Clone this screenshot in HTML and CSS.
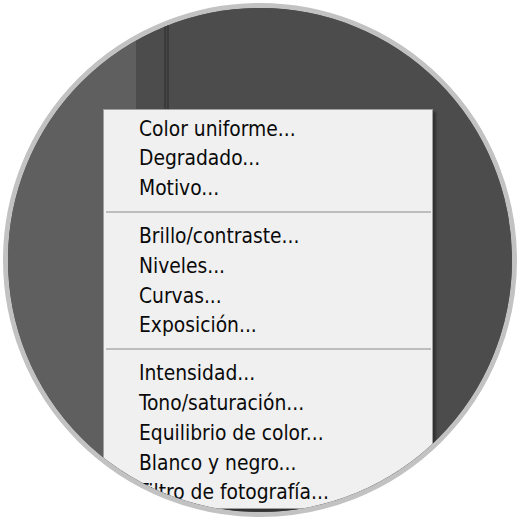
FILE: index.html
```html
<!DOCTYPE html>
<html lang="es">
<head>
<meta charset="utf-8">
<title>Menú de ajustes</title>
<link rel="stylesheet" href="styles.css">
</head>
<body>
<div class="lens">
  <div class="panel-left"></div>
  <div class="canvas"><div class="divider"></div></div>
  <ul class="menu">
    <li>Color uniforme...</li>
    <li>Degradado...</li>
    <li>Motivo...</li>
    <li class="sep"></li>
    <li>Brillo/contraste...</li>
    <li>Niveles...</li>
    <li>Curvas...</li>
    <li>Exposición...</li>
    <li class="sep"></li>
    <li>Intensidad...</li>
    <li>Tono/saturación...</li>
    <li>Equilibrio de color...</li>
    <li>Blanco y negro...</li>
    <li>Filtro de fotografía...</li>
  </ul>
</div>
</body>
</html>
```
FILE: styles.css
```css
html, body {
  margin: 0;
  padding: 0;
  background: #ffffff;
}
body {
  width: 520px;
  height: 520px;
  overflow: hidden;
}
.lens {
  position: relative;
  box-sizing: border-box;
  width: 514px;
  height: 514px;
  margin: 3px;
  border-radius: 50%;
  border: 5px solid #c2c2c2;
  overflow: hidden;
  display: flex;
  background: #4d4d4d;
}
.panel-left {
  width: 128px;
  flex: none;
  background: #5f5f5f;
}
.canvas {
  flex: 1;
  display: flex;
  padding-left: 28px;
  background: #4c4c4c;
}
.divider {
  width: 1px;
  border-left: 2px solid #3b3b3b;
  border-right: 2px solid #3b3b3b;
  background: #464646;
}
.menu {
  position: absolute;
  left: 95px;
  top: 101px;
  width: 328px;
  margin: 0;
  padding: 4.5px 0 0 0;
  list-style: none;
  background: #f0f0f0;
  border: 1px solid #a0a0a0;
  box-shadow: 3px 3px 2px rgba(0, 0, 0, 0.35);
  font-family: "DejaVu Sans Condensed", "DejaVu Sans", sans-serif;
  font-size: 20.8px;
  line-height: 29.9px;
  color: #0a0a0a;
}
.menu li {
  padding-left: 35px;
  white-space: nowrap;
}
.menu li.sep {
  height: 2px;
  padding: 0;
  margin: 6.5px 1px 9px 2px;
  background: #bdbdbd;
}
```
